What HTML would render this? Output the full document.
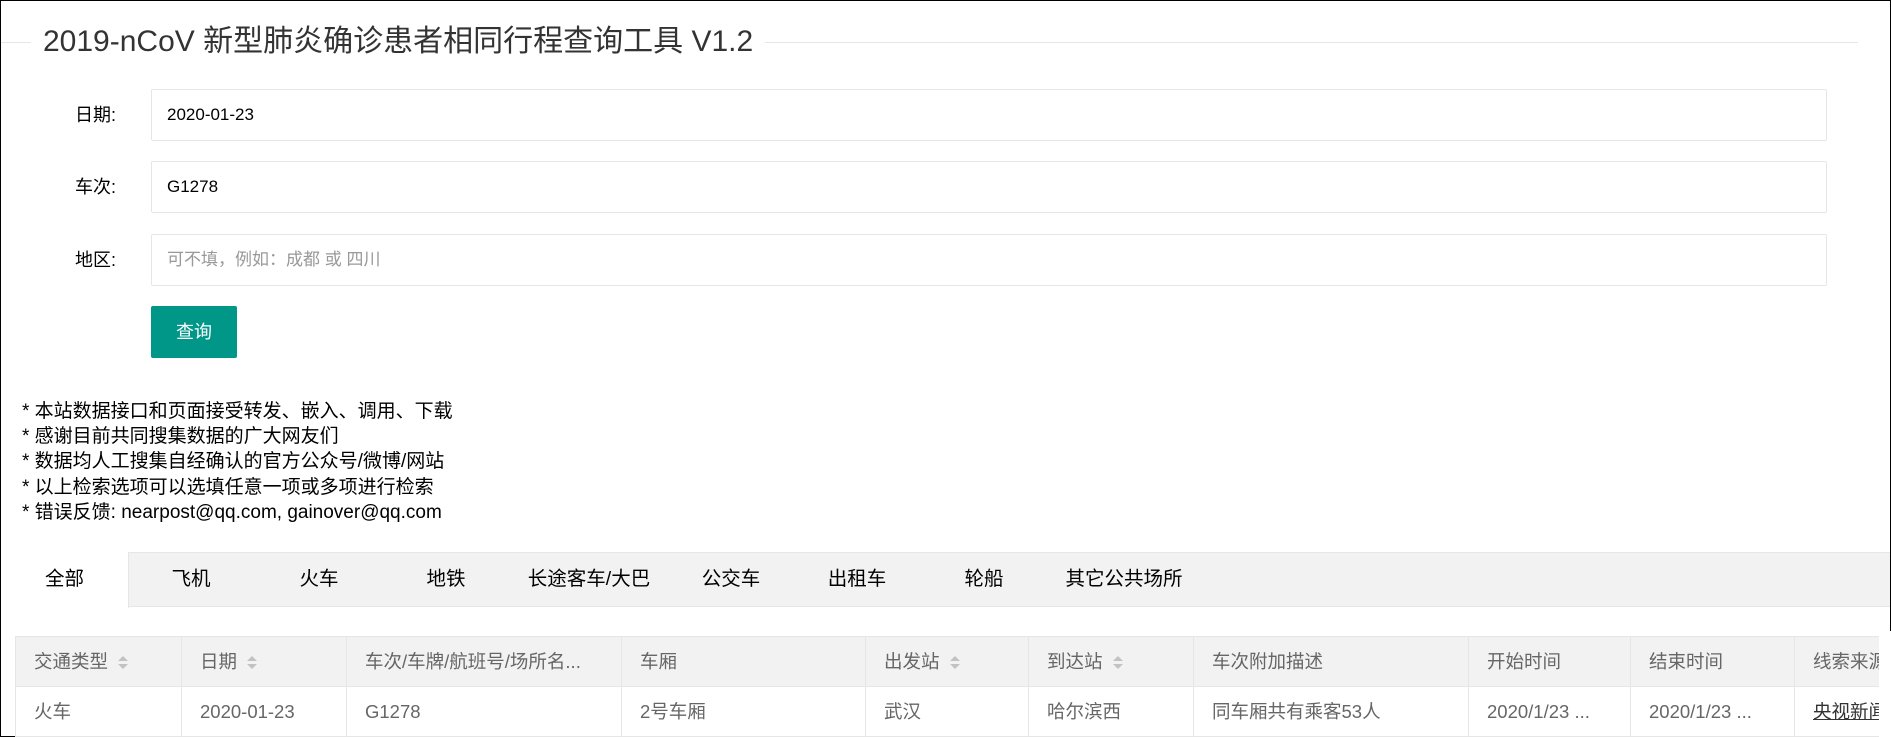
<!DOCTYPE html>
<html><head><meta charset="utf-8">
<style>
*{box-sizing:border-box;margin:0;padding:0}
html,body{width:1891px;height:737px;overflow:hidden;background:#fff}
body{font-family:"Liberation Sans","Noto Sans CJK SC",sans-serif;color:#333;position:relative;border:1px solid #000}
.abs{position:absolute}
.legend{left:0;top:41px;width:1857px;height:1px;background:#e6e6e6}
.title{left:30px;top:21px;padding:0 12px;background:#fff;font-size:30px;color:#333;line-height:40px}
.lbl{left:43px;width:72px;text-align:right;font-size:18px;color:#000;line-height:24px}
.inp{left:150px;width:1676px;height:52px;border:1px solid #e6e6e6;border-radius:2px;font-size:17px;padding-left:15px;line-height:50px;color:#000}
.ph{color:#999}
.btn{left:150px;top:305px;width:86px;height:52px;background:#009688;color:#fff;font-size:18px;text-align:center;line-height:52px;border-radius:2px}
.notes{left:21px;top:398px;font-size:19px;line-height:25.2px;color:#000}
.tabbar{left:0;top:551px;width:1889px;height:55px;background:#f2f2f2;border-top:1px solid #e6e6e6;border-bottom:1px solid #e6e6e6}
.tab{top:551px;height:55px;line-height:55px;font-size:19.5px;color:#000;text-align:center;width:128px}
.act{background:#fff;border-right:1px solid #e6e6e6;height:56px}
table{position:absolute;left:14px;top:635px;border-collapse:collapse;table-layout:fixed;width:1900px;font-size:18.5px;color:#666}
td,th{border:1px solid #e6e6e6;height:50px;padding:0 0 0 18px;text-align:left;font-weight:normal;white-space:nowrap;overflow:hidden;line-height:24px;vertical-align:middle}
th{background:#f2f2f2;color:#666}
.clip{position:absolute;left:1878px;top:630px;width:12px;height:107px;background:#fff}
.s{display:inline-block;vertical-align:middle;margin-left:10px;width:10px;height:14px;position:relative}
.s:before{content:"";position:absolute;left:0;top:0;border:5px solid transparent;border-bottom:5px solid #c2c2c2;border-top:0}
.s:after{content:"";position:absolute;left:0;top:8px;border:5px solid transparent;border-top:5px solid #c2c2c2;border-bottom:0}
</style></head><body>
<div class="abs legend"></div>
<div class="abs title">2019-nCoV 新型肺炎确诊患者相同行程查询工具 V1.2</div>
<div class="abs lbl" style="top:102px">日期:</div>
<div class="abs inp" style="top:88px">2020-01-23</div>
<div class="abs lbl" style="top:174px">车次:</div>
<div class="abs inp" style="top:160px">G1278</div>
<div class="abs lbl" style="top:247px">地区:</div>
<div class="abs inp ph" style="top:233px">可不填，例如：成都 或 四川</div>
<div class="abs btn">查询</div>
<div class="abs notes">* 本站数据接口和页面接受转发、嵌入、调用、下载<br>* 感谢目前共同搜集数据的广大网友们<br>* 数据均人工搜集自经确认的官方公众号/微博/网站<br>* 以上检索选项可以选填任意一项或多项进行检索<br>* 错误反馈: nearpost@qq.com, gainover@qq.com</div>
<div class="abs tabbar"></div>
<div class="abs tab act" style="left:0">全部</div>
<div class="abs tab" style="left:126px">飞机</div>
<div class="abs tab" style="left:254px">火车</div>
<div class="abs tab" style="left:381px">地铁</div>
<div class="abs tab" style="left:508px;width:160px">长途客车/大巴</div>
<div class="abs tab" style="left:666px">公交车</div>
<div class="abs tab" style="left:792px">出租车</div>
<div class="abs tab" style="left:919px">轮船</div>
<div class="abs tab" style="left:1043px;width:160px">其它公共场所</div>
<table>
<colgroup><col style="width:166px"><col style="width:165px"><col style="width:275px"><col style="width:244px"><col style="width:163px"><col style="width:165px"><col style="width:275px"><col style="width:162px"><col style="width:164px"><col style="width:121px"></colgroup>
<tr><th>交通类型<span class="s"></span></th><th>日期<span class="s"></span></th><th>车次/车牌/航班号/场所名...</th><th>车厢</th><th>出发站<span class="s"></span></th><th>到达站<span class="s"></span></th><th>车次附加描述</th><th>开始时间</th><th>结束时间</th><th>线索来源</th></tr>
<tr><td>火车</td><td>2020-01-23</td><td>G1278</td><td>2号车厢</td><td>武汉</td><td>哈尔滨西</td><td>同车厢共有乘客53人</td><td>2020/1/23 ...</td><td>2020/1/23 ...</td><td style="color:#333;text-decoration:underline">央视新闻</td></tr>
</table>
<div class="clip"></div>
</body></html>
